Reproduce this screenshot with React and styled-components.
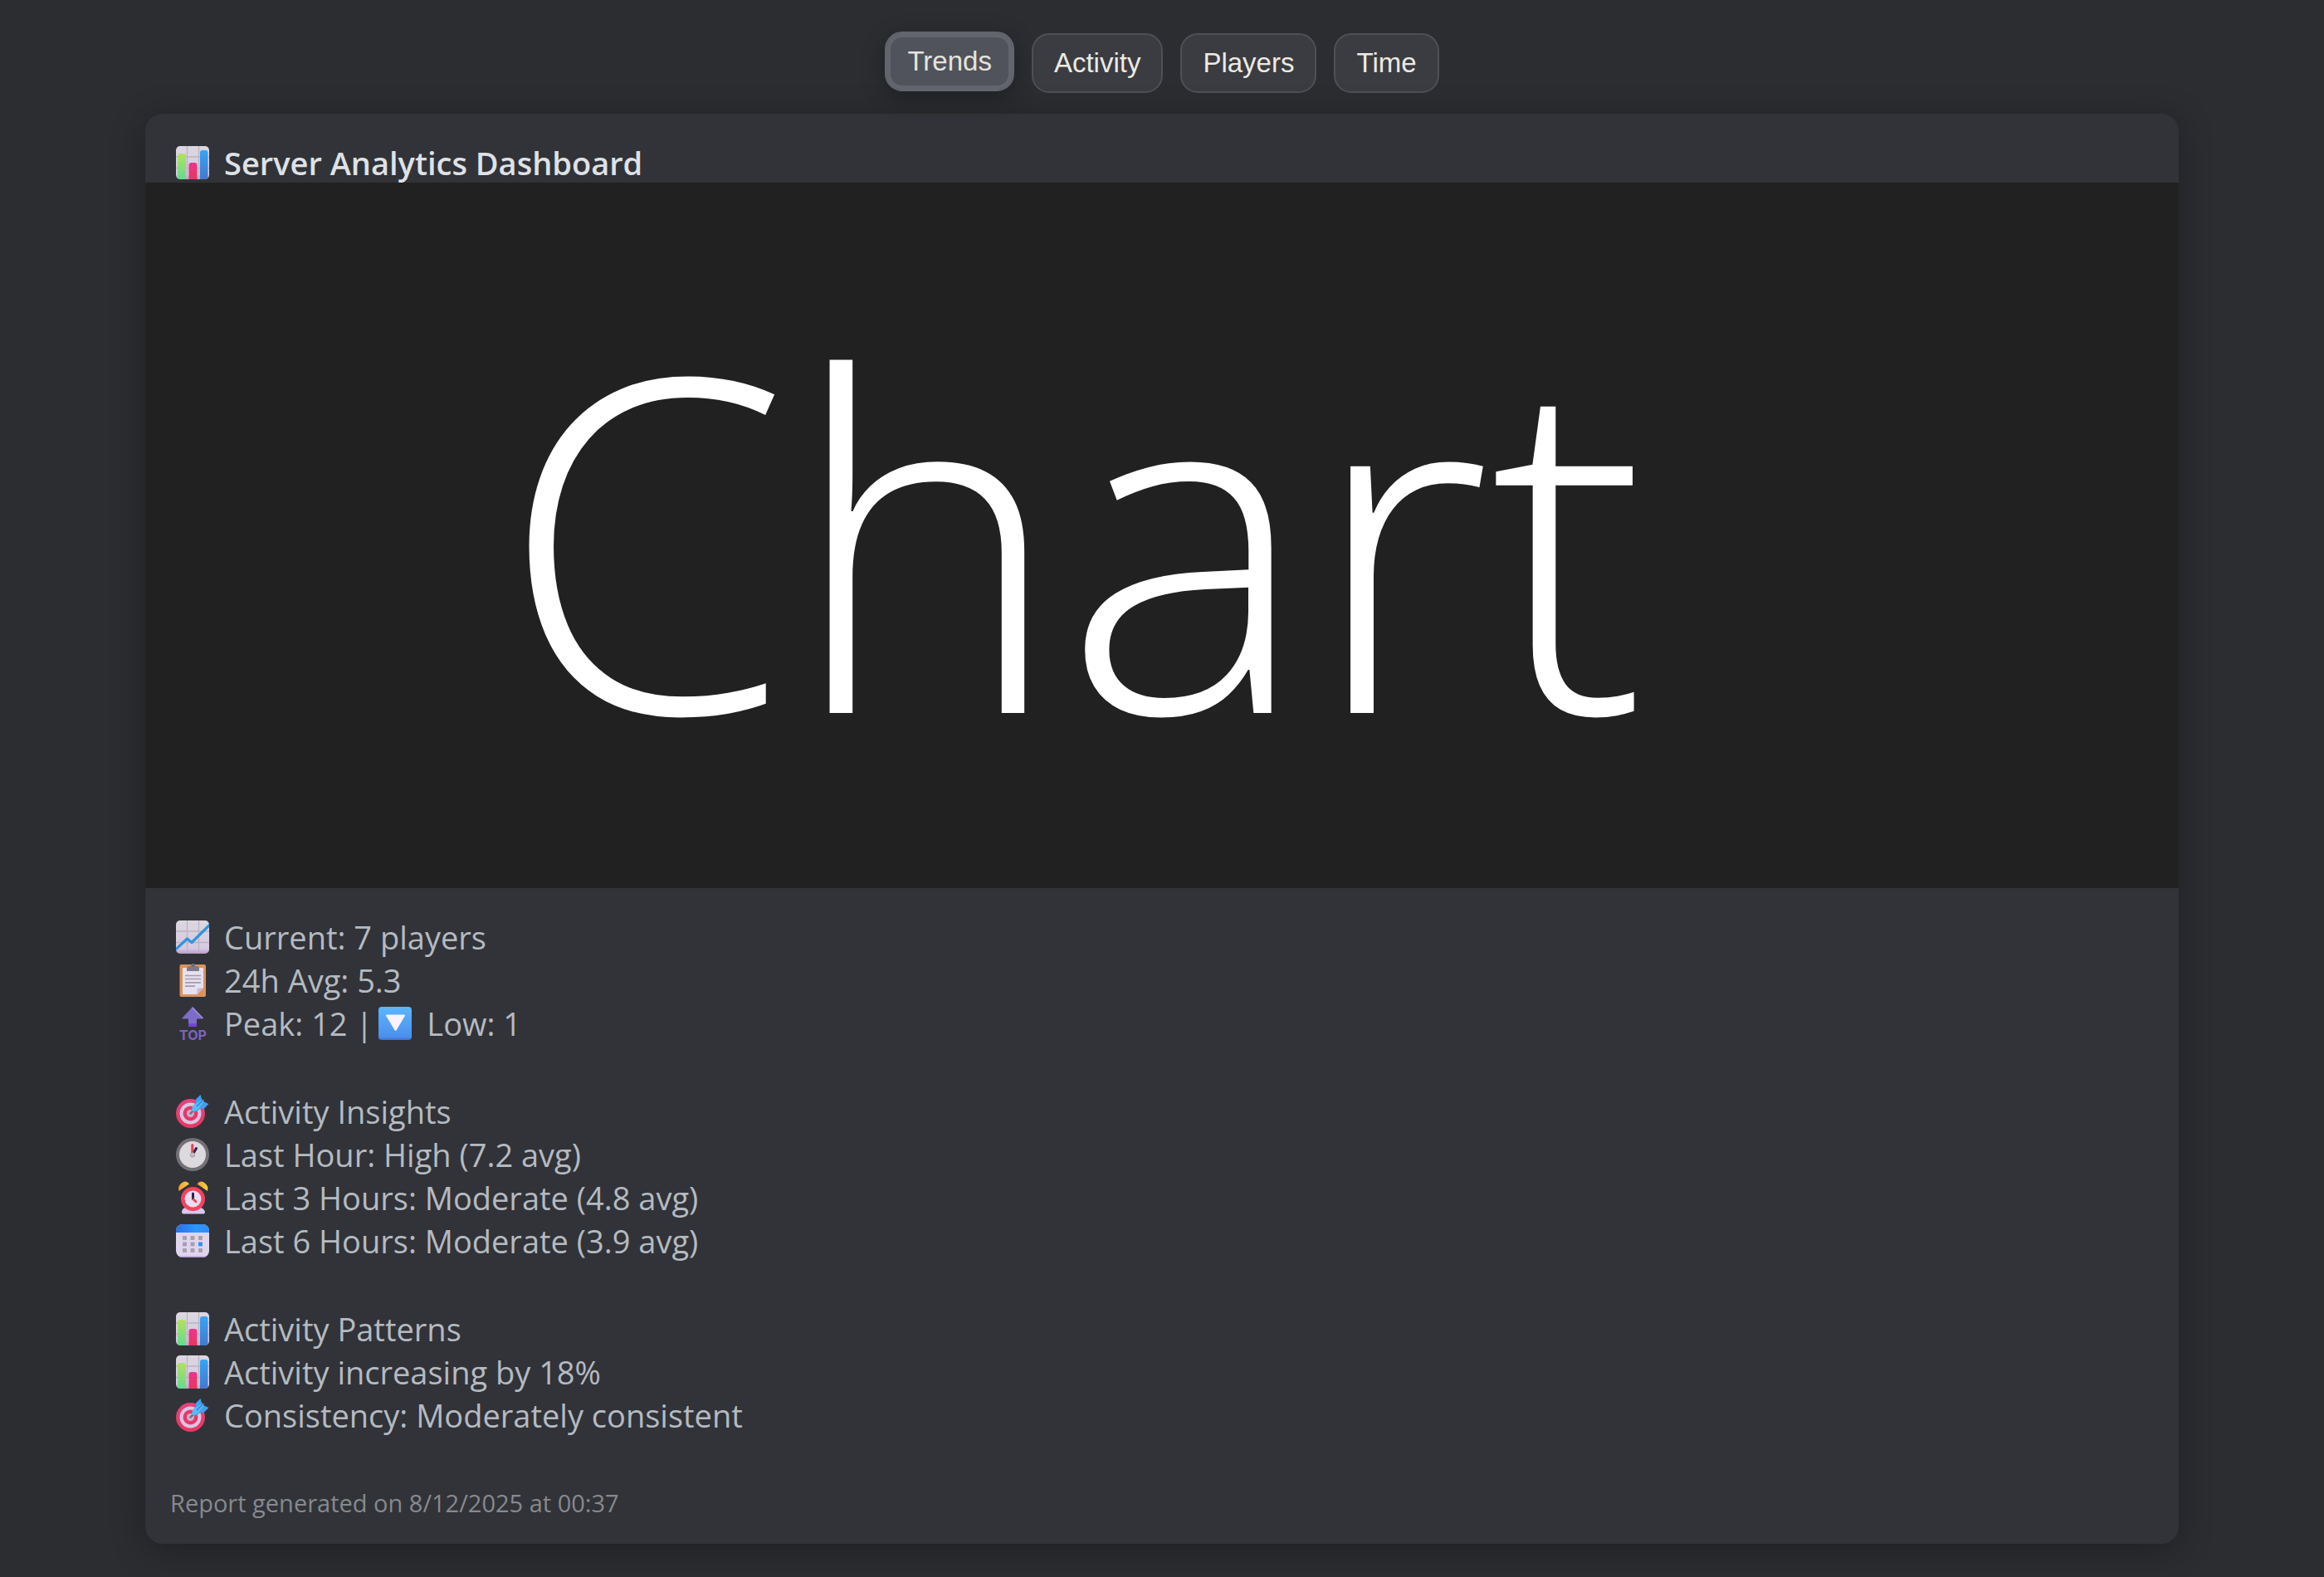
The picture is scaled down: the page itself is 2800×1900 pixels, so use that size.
import React, { useState } from "react";
import styled, { createGlobalStyle, css } from "styled-components";

const Global = createGlobalStyle`
  * { box-sizing: border-box; }
  body {
    margin: 0;
    min-height: 100vh;
    background: #2b2d31;
    font-family: "Segoe UI", "Open Sans", "Noto Sans", sans-serif;
  }
`;

const Page = styled.main`
  padding: 40px 0;
`;

const Content = styled.div`
  width: 87.5%;
  margin: 0 auto;
  display: flex;
  flex-direction: column;
  gap: 25px;
`;

const TabBar = styled.nav`
  display: flex;
  justify-content: center;
  gap: 21px;
`;

const Tab = styled.button`
  padding: 16px 25px;
  border: 2px solid #4f5055;
  border-radius: 21px;
  background: #3b3c41;
  color: #eceae2;
  font-family: Arial, "Liberation Sans", sans-serif;
  font-size: 33px;
  line-height: 36px;
  cursor: pointer;
  ${(p) =>
    p.$active &&
    css`
      background: #50535b;
      border-color: #62656d;
      color: #e5e3db;
      box-shadow: inset 0 0 0 5px #62656d, 0 7px 28px rgba(0, 0, 0, 0.3);
      transform: translateY(-2px);
    `}
`;

const Card = styled.article`
  overflow: hidden;
  border-radius: 21px;
  background: #313338;
  box-shadow: 0 7px 42px rgba(0, 0, 0, 0.3);
`;

const Title = styled.h1`
  margin: 0;
  padding: 35px 30px 0;
  display: flex;
  align-items: center;
  color: #dfe1e5;
  font-size: 38px;
  font-weight: 600;
  line-height: 48px;
`;

const ChartImage = styled.figure`
  margin: 0;
  padding: 0 8.75% 6px 0;
  aspect-ratio: 49 / 17;
  display: flex;
  align-items: center;
  justify-content: center;
  background: #212121;
  color: #fff;
  font-family: "Open Sans", "Noto Sans", sans-serif;
  font-size: 20vw;
  font-weight: 300;
  line-height: 1;
`;

const Report = styled.div`
  padding: 33px 30px 0;
  display: flex;
  flex-direction: column;
  gap: 54px;
`;

const Group = styled.ul`
  margin: 0;
  padding: 0;
  list-style: none;
`;

const Row = styled.li`
  display: flex;
  align-items: center;
  color: #b5bac1;
  font-size: 38px;
  line-height: 52px;
`;

const Footer = styled.footer`
  padding: 60px 30px 29px;
  color: #87898e;
  font-size: 29px;
  line-height: 40px;
`;

const Glyph = styled.svg`
  flex: none;
  width: 40px;
  height: 40px;
  margin: 0 18px 0 7px;
  overflow: visible;
`;

const Icon = ({ children }) => (
  <Glyph viewBox="0 0 40 40" aria-hidden="true">
    {children}
  </Glyph>
);

const HiddenSvg = styled.svg`
  display: block;
`;

const Defs = () => (
  <HiddenSvg width="0" height="0" aria-hidden="true">
    <defs>
      <linearGradient id="paper" x1="0" y1="0" x2="0" y2="1">
        <stop offset="0" stopColor="#dcd7e0" />
        <stop offset="0.85" stopColor="#d6c9e2" />
        <stop offset="1" stopColor="#b79cc9" />
      </linearGradient>
      <linearGradient id="green" x1="0" y1="0" x2="0" y2="1">
        <stop offset="0" stopColor="#b3e15c" />
        <stop offset="1" stopColor="#62dc8f" />
      </linearGradient>
      <linearGradient id="pink" x1="0" y1="0" x2="0" y2="1">
        <stop offset="0" stopColor="#ea3590" />
        <stop offset="1" stopColor="#e8365e" />
      </linearGradient>
      <linearGradient id="blue" x1="0" y1="0" x2="0" y2="1">
        <stop offset="0" stopColor="#35a5f7" />
        <stop offset="1" stopColor="#4478cc" />
      </linearGradient>
      <linearGradient id="key" x1="0" y1="0" x2="0" y2="1">
        <stop offset="0" stopColor="#5db6ff" />
        <stop offset="0.9" stopColor="#4b90ec" />
        <stop offset="1" stopColor="#3f6fd2" />
      </linearGradient>
      <linearGradient id="target" x1="0" y1="0" x2="0" y2="1">
        <stop offset="0" stopColor="#e2457f" />
        <stop offset="1" stopColor="#ea3564" />
      </linearGradient>
      <linearGradient id="bell" x1="0" y1="0" x2="1" y2="0">
        <stop offset="0" stopColor="#f59a35" />
        <stop offset="1" stopColor="#f9d445" />
      </linearGradient>
      <linearGradient id="header" x1="0" y1="0" x2="1" y2="0">
        <stop offset="0" stopColor="#2a6fe6" />
        <stop offset="0.6" stopColor="#2d97fb" />
        <stop offset="1" stopColor="#2f8df0" />
      </linearGradient>
      <clipPath id="tile">
        <rect width="40" height="40" rx="5" />
      </clipPath>
      <clipPath id="sheet">
        <rect width="40" height="40" rx="8" />
      </clipPath>
    </defs>
  </HiddenSvg>
);

const Grid = () => (
  <>
    <rect width="40" height="40" fill="url(#paper)" />
    <path d="M13.5 0v40M27.5 0v40M0 13h40M0 26.5h40" stroke="#bcb4c2" strokeWidth="1.3" />
  </>
);

const BarChart = () => (
  <Icon>
    <g clipPath="url(#tile)">
      <Grid />
      <path d="M2 40V12q0-3 3-3h4q3 0 3 3v28z" fill="url(#green)" />
      <path d="M15.5 40V23q0-3 3-3h4q3 0 3 3v17z" fill="url(#pink)" />
      <path d="M29 40V8q0-3 3-3h3.500q3 0 3 3v32z" fill="url(#blue)" />
    </g>
  </Icon>
);

const LineChart = () => (
  <Icon>
    <g clipPath="url(#tile)">
      <Grid />
      <path d="M-1 35.5 13.5 22l5.500 4.500L41 5" fill="none" stroke="#3294dc" strokeWidth="3.2" strokeLinejoin="round" />
    </g>
  </Icon>
);

const Clipboard = () => (
  <Icon>
    <rect x="4.5" y="1" width="31.5" height="39" rx="2" fill="#dc935c" />
    <path d="M8 5h25v24.500L25.500 37H8z" fill="#e6e0f0" />
    <path d="M33 29.500H27q-1.500 0-1.500 1.500v6z" fill="#c9b9d8" />
    <path d="M13 9V6q0-3 3.500-3h1q.5-3 3-3t3 3h1q3.500 0 3.500 3v3z" fill="#817985" />
    <circle cx="20.5" cy="2.6" r="1" fill="#55505c" />
    <path d="M11 14.500h19M11 18.500h19M11 22.800h19M11 27.200h12" stroke="#a39dab" strokeWidth="1.7" />
  </Icon>
);

const TopArrow = () => (
  <Icon>
    <path d="M20 0 33 13.500q0 1-1.200 1H25V23q0 1-1 1h-8q-1 0-1-1v-8.500H8.500q-1.500 0-1-1z" fill="#7f6cc6" />
    <path d="M20 0 33 13.500h-2L19.500 2z" fill="#9c8bd8" />
    <path d="M15 20h10v3q0 1-1 1h-8q-1 0-1-1z" fill="#7546d2" />
    <text x="20.5" y="39.5" textAnchor="middle" fill="#7d62c4" fontFamily="Inter, sans-serif" fontSize="16" fontWeight="700">
      TOP
    </text>
  </Icon>
);

const DownKey = () => (
  <Icon>
    <rect width="40" height="40" rx="4" fill="url(#key)" />
    <path d="M10 9.500h21q1.600 0 .8 1.500L21.600 28.300q-1 1.600-2 0L9.200 11q-.8-1.500.8-1.500z" fill="#fbf3ff" />
  </Icon>
);

const Target = () => (
  <Icon>
    <circle cx="17.5" cy="22.5" r="17.5" fill="url(#target)" />
    <circle cx="17.5" cy="22.5" r="13" fill="#d9c6df" />
    <circle cx="17.5" cy="22.5" r="9" fill="#e9376b" />
    <circle cx="17.5" cy="22.5" r="4.5" fill="#c5b3cb" />
    <path d="M17.500 22.500 25 15" stroke="#7b6f86" strokeWidth="2.5" strokeLinecap="round" />
    <path d="M19.500 19.500q-1-4 2.500-7.500l2-2.500-.2-4L29.500 0l2 6.500 1-1 1.500 1-1 1.500 6.500 3-6 6-4-.3-2.500 2q-3.500 3-7.500.8z" fill="#3f9ff0" />
    <path d="M19.500 19.500q-1-4 3-8l9-5.500 2 2-6 9q-4 4-8 2.500z" fill="#55bdf6" />
    <path d="m25 14 8-8" stroke="#287fdc" strokeWidth="1.3" />
  </Icon>
);

const Clock = () => (
  <Icon>
    <circle cx="20" cy="20" r="20" fill="#747176" />
    <circle cx="20" cy="20" r="16" fill="#dddade" />
    <path d="M20 20 24.500 12.500" stroke="#2e1f4c" strokeWidth="3" strokeLinecap="round" />
    <path d="M19.800 18.500V8.500" stroke="#ee3c58" strokeWidth="3" strokeLinecap="round" />
    <circle cx="20" cy="20.5" r="3" fill="#a6a3aa" />
    <circle cx="20" cy="20" r="2" fill="#c4c1c8" />
  </Icon>
);

const Alarm = () => (
  <Icon>
    <path d="M3.500 12Q2 6 6.500 2.500 12-2 16 3.500z" fill="url(#bell)" />
    <path d="M38 12q1.500-6-3-9.500-5.500-4.500-9.500 1z" fill="url(#bell)" />
    <path d="M7 37.500q0-5 5-5.500h17q5 .5 6 5.500 0 2-2 2H9q-2 0-2-2z" fill="#dac7ec" />
    <circle cx="20.5" cy="21.5" r="14.5" fill="#f5425f" />
    <circle cx="20.5" cy="21.5" r="10" fill="#e9def0" />
    <path d="M20.500 21.500V15" stroke="#2e2348" strokeWidth="3" strokeLinecap="round" />
    <path d="m21 22 3 2.800" stroke="#ee4058" strokeWidth="2.8" strokeLinecap="round" />
  </Icon>
);

const Calendar = () => (
  <Icon>
    <g clipPath="url(#sheet)">
      <rect width="40" height="40" fill="#e0d5ee" />
      <rect y="38.5" width="40" height="1.5" fill="#b99bd4" />
      <rect width="40" height="10" fill="url(#header)" />
    </g>
    {[14, 21.5, 29].map((y) =>
      [8, 17.5, 27].map((x) => (
        <rect key={`${x}-${y}`} x={x} y={y} width="5" height="5" rx="0.8" fill={x === 27 && y === 21.5 ? "#2f93f5" : "#a9a0b2"} />
      ))
    )}
  </Icon>
);

const tabs = ["Trends", "Activity", "Players", "Time"];

const groups = [
  [
    [LineChart, "Current: 7 players"],
    [Clipboard, "24h Avg: 5.3"],
    [TopArrow, "Peak: 12 |", DownKey, "Low: 1"],
  ],
  [
    [Target, "Activity Insights"],
    [Clock, "Last Hour: High (7.2 avg)"],
    [Alarm, "Last 3 Hours: Moderate (4.8 avg)"],
    [Calendar, "Last 6 Hours: Moderate (3.9 avg)"],
  ],
  [
    [BarChart, "Activity Patterns"],
    [BarChart, "Activity increasing by 18%"],
    [Target, "Consistency: Moderately consistent"],
  ],
];

export default function App() {
  const [active, setActive] = useState("Trends");
  return (
    <Page>
      <Global />
      <Defs />
      <Content>
        <TabBar aria-label="Reports">
          {tabs.map((name) => (
            <Tab key={name} type="button" $active={name === active} aria-pressed={name === active} onClick={() => setActive(name)}>
              {name}
            </Tab>
          ))}
        </TabBar>
        <Card>
          <Title>
            <BarChart />
            <span>Server Analytics Dashboard</span>
          </Title>
          <ChartImage>Chart</ChartImage>
          <Report>
            {groups.map((rows, g) => (
              <Group key={g}>
                {rows.map((parts, r) => (
                  <Row key={r}>
                    {parts.map((Part, i) => (typeof Part === "string" ? <span key={i}>{Part}</span> : <Part key={i} />))}
                  </Row>
                ))}
              </Group>
            ))}
          </Report>
          <Footer>Report generated on 8/12/2025 at 00:37</Footer>
        </Card>
      </Content>
    </Page>
  );
}
